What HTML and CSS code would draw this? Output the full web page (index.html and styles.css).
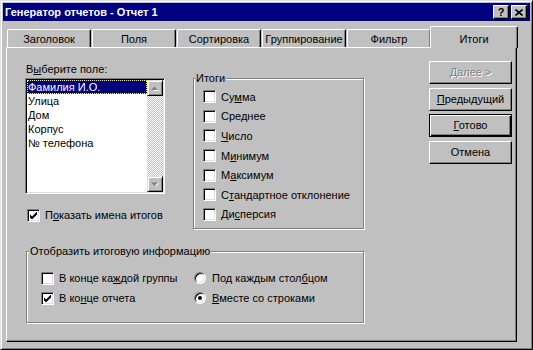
FILE: index.html
```html
<!DOCTYPE html>
<html>
  <head>
    <title>Генератор отчетов - Отчет 1</title>
    <link rel="stylesheet" href="styles.css">
  </head>
  <body>
    <div class="window">
      <div class="titlebar">
        <span class="title">Генератор отчетов - Отчет 1</span>
        <span class="tbtn help">?</span>
        <span class="tbtn close">
          <svg width="8" height="7" viewBox="0 0 8 7"><path d="M0.5 0.5 L7.5 6.5 M7.5 0.5 L0.5 6.5" stroke="#000" stroke-width="1.6"/></svg>
        </span>
      </div>

      <div class="tabs">
        <div class="tab">Заголовок</div>
        <div class="tab">Поля</div>
        <div class="tab">Сортировка</div>
        <div class="tab">Группирование</div>
        <div class="tab">Фильтр</div>
        <div class="tab active">Итоги</div>
      </div>

      <div class="panel">
        <div class="main">
          <div class="top">
            <div class="field-col">
              <div class="caption">В<u>ы</u>берите поле:</div>
              <div class="listbox">
                <ul class="items">
                  <li class="selected"><span>Фамилия И.О.</span></li>
                  <li>Улица</li>
                  <li>Дом</li>
                  <li>Корпус</li>
                  <li>№ телефона</li>
                </ul>
                <div class="scrollbar">
                  <div class="sbtn">
                    <svg width="8" height="5" viewBox="0 0 8 5"><path d="M1 4 L4 1 L7 4 Z" fill="#fff" transform="translate(1 1)"/><path d="M0 4 L3.5 0.5 L7 4 Z" fill="#808080"/></svg>
                  </div>
                  <div class="track"></div>
                  <div class="sbtn">
                    <svg width="8" height="5" viewBox="0 0 8 5"><path d="M1 1 L4 4 L7 1 Z" fill="#fff" transform="translate(1 0)"/><path d="M0 0.5 L3.5 4 L7 0.5 Z" fill="#808080"/></svg>
                  </div>
                </div>
              </div>
              <div class="row show-names">
                <span class="checkbox checked"><svg width="7" height="7" viewBox="0 0 7 7"><path d="M0 2.5 L2 4.5 L7 -0.5 L7 2.5 L2 7.5 L0 5.5 Z"/></svg></span>
                <span>П<u>о</u>казать имена итогов</span>
              </div>
            </div>

            <fieldset class="group totals">
              <legend>Итоги</legend>
              <div class="row"><span class="checkbox"></span><span>Су<u>м</u>ма</span></div>
              <div class="row"><span class="checkbox"></span><span>Сре<u>д</u>нее</span></div>
              <div class="row"><span class="checkbox"></span><span><u>Ч</u>исло</span></div>
              <div class="row"><span class="checkbox"></span><span>М<u>и</u>нимум</span></div>
              <div class="row"><span class="checkbox"></span><span>М<u>а</u>ксимум</span></div>
              <div class="row"><span class="checkbox"></span><span>С<u>т</u>андартное отклонение</span></div>
              <div class="row"><span class="checkbox"></span><span>Ди<u>с</u>персия</span></div>
            </fieldset>
          </div>

          <fieldset class="group display">
            <legend>Отобразить итоговую информацию</legend>
            <div class="options">
              <div class="row"><span class="checkbox"></span><span>В конце ка<u>ж</u>дой группы</span></div>
              <div class="row"><span class="radio"></span><span>Под каждым стол<u>б</u>цом</span></div>
              <div class="row">
                <span class="checkbox checked"><svg width="7" height="7" viewBox="0 0 7 7"><path d="M0 2.5 L2 4.5 L7 -0.5 L7 2.5 L2 7.5 L0 5.5 Z"/></svg></span>
                <span>В ко<u>н</u>це отчета</span>
              </div>
              <div class="row"><span class="radio on"></span><span><u>В</u>месте со строками</span></div>
            </div>
          </fieldset>
        </div>

        <div class="buttons">
          <div class="btn disabled"><u>Д</u>алее &gt;</div>
          <div class="btn"><u>П</u>редыдущий</div>
          <div class="btn default"><u>Г</u>отово</div>
          <div class="btn">Отмена</div>
        </div>
      </div>
    </div>
  </body>
</html>
```

FILE: styles.css
```css
body {
  margin: 0;
  background-color: #c0c0c0;
  font-family: "Liberation Sans", Arial, sans-serif;
  font-size: 11px;
  color: #000;
}
.window {
  width: 533px;
  height: 350px;
  box-sizing: border-box;
  padding: 2px;
  background-color: #c0c0c0;
  border: 1px solid;
  border-color: #dfdfdf #000 #000 #dfdfdf;
  box-shadow: inset 1px 1px #fff, inset -1px -1px #808080;
}
.titlebar {
  height: 18px;
  background-color: #000080;
  display: flex;
  align-items: center;
  padding-right: 3px;
}
.title {
  flex-grow: 1;
  margin-left: 2px;
  color: #fff;
  font-weight: bold;
  white-space: nowrap;
}
.tbtn {
  width: 16px;
  height: 14px;
  box-sizing: border-box;
  display: flex;
  align-items: center;
  justify-content: center;
  background-color: #c0c0c0;
  border: 1px solid;
  border-color: #fff #000 #000 #fff;
  box-shadow: inset -1px -1px #808080;
  font-weight: bold;
  line-height: 12px;
}
.close {
  margin-left: 2px;
}

/* tabs */
.tabs {
  display: flex;
  align-items: flex-end;
  height: 21px;
  margin-top: 5px;
  padding-left: 4px;
}
.tab {
  width: 84px;
  height: 18px;
  margin-right: 1px;
  box-sizing: border-box;
  padding-top: 3px;
  line-height: 13px;
  text-align: center;
  white-space: nowrap;
  border-left: 1px solid #fff;
  border-top: 1px solid #fff;
  border-right: 1px solid #000;
  border-radius: 2px 2px 0 0;
  box-shadow: inset -1px 0 #808080;
}
.tab.active {
  width: 88px;
  height: 22px;
  margin: 0 -2px -1px -2px;
  padding-top: 6px;
  position: relative;
  z-index: 1;
  background-color: #c0c0c0;
}

/* panel */
.panel {
  display: flex;
  margin-left: 3px;
  width: 511px;
  height: 295px;
  box-sizing: border-box;
  padding: 13px 0 0 18px;
  border: 1px solid;
  border-color: #fff #000 #000 #fff;
  box-shadow: inset -1px -1px #808080;
}
.main {
  width: 339px;
  padding-top: 2px;
}
.top {
  display: flex;
}
.field-col {
  width: 140px;
}
.caption {
  line-height: 13px;
  margin-bottom: 2px;
  padding-left: 1px;
}
.listbox {
  display: flex;
  height: 116px;
  box-sizing: border-box;
  background-color: #fff;
  border: 1px solid;
  border-color: #808080 #fff #fff #808080;
  box-shadow: inset 1px 1px #000, inset -1px -1px #dfdfdf;
  padding: 1px;
}
.items {
  list-style: none;
  margin: 0;
  padding: 0;
  flex-grow: 1;
}
.items li {
  height: 14px;
  line-height: 14px;
  padding-left: 1px;
  white-space: nowrap;
}
.items li.selected {
  background-color: #000080;
  color: #fff;
  outline: 1px dotted #ffff00;
  outline-offset: -1px;
}
.scrollbar {
  width: 16px;
  display: flex;
  flex-direction: column;
}
.sbtn {
  height: 16px;
  box-sizing: border-box;
  display: flex;
  align-items: center;
  justify-content: center;
  background-color: #c0c0c0;
  border: 1px solid;
  border-color: #dfdfdf #000 #000 #dfdfdf;
  box-shadow: inset 1px 1px #fff, inset -1px -1px #808080;
}
.track {
  flex-grow: 1;
  background: repeating-conic-gradient(#fff 0 25%, #c0c0c0 0 50%) 0 0 / 2px 2px;
}

.row {
  display: flex;
  align-items: center;
  gap: 5px;
  white-space: nowrap;
}
.show-names {
  height: 16px;
  margin-top: 13px;
  padding-left: 2px;
}
.checkbox {
  width: 13px;
  height: 13px;
  flex-shrink: 0;
  box-sizing: border-box;
  display: flex;
  align-items: center;
  justify-content: center;
  background-color: #fff;
  border: 1px solid;
  border-color: #808080 #fff #fff #808080;
  box-shadow: inset 1px 1px #000, inset -1px -1px #dfdfdf;
}
.radio {
  width: 12px;
  height: 12px;
  flex-shrink: 0;
  box-sizing: border-box;
  display: flex;
  align-items: center;
  justify-content: center;
  background-color: #fff;
  border-radius: 50%;
  border: 1px solid;
  border-color: #808080 #fff #fff #808080;
  box-shadow: inset 1px 1px #000, inset -1px -1px #dfdfdf;
}
.radio.on::after {
  content: "";
  width: 4px;
  height: 4px;
  border-radius: 50%;
  background-color: #000;
}

/* group boxes */
.group {
  margin: 0;
  min-width: 0;
  box-sizing: border-box;
  border: 1px solid #808080;
  box-shadow: inset 1px 1px #fff, 1px 1px #fff;
}
.group legend {
  padding: 0 1px;
  line-height: 13px;
  background-color: #c0c0c0;
}
.totals {
  width: 171px;
  height: 157px;
  margin-left: 28px;
  margin-top: 9px;
  padding: 2px 0 0 9px;
}
.totals legend {
  margin-left: -8px;
}
.totals .row {
  height: 19.6px;
}
.display {
  width: 338px;
  height: 78px;
  margin: 16px 0 0 1px;
  padding: 10px 0 0 14px;
}
.display legend {
  margin-left: -12px;
}
.options {
  display: grid;
  grid-template-columns: 153px auto;
}
.options .row {
  height: 20px;
}
.options .radio {
  margin-right: 1px;
}

/* buttons */
.buttons {
  margin-left: 65px;
  display: flex;
  flex-direction: column;
  gap: 3.6px;
}
.btn {
  width: 83px;
  height: 23px;
  box-sizing: border-box;
  line-height: 21px;
  text-align: center;
  border: 1px solid;
  border-color: #fff #000 #000 #fff;
  box-shadow: inset -1px -1px #808080;
}
.btn.disabled {
  color: #808080;
  text-shadow: 1px 1px #fff;
}
.btn.default {
  outline: 1px solid #000;
  outline-offset: -1px;
  border-color: #000;
  box-shadow: inset 1px 1px #fff, inset -1px -1px #000, inset -2px -2px #808080;
}
```
